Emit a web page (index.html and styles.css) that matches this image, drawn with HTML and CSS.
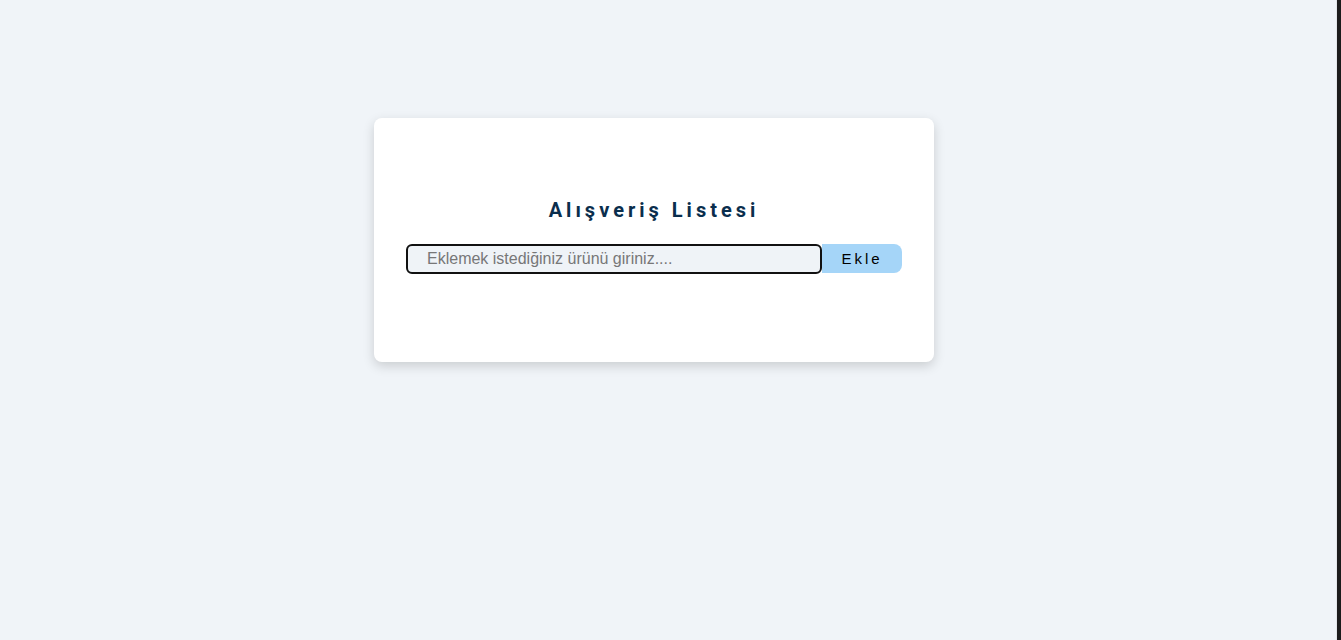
FILE: index.html
```html
<!DOCTYPE html>
<html lang="tr">
<head>
<meta charset="utf-8">
<title>Alışveriş Listesi</title>
<link rel="stylesheet" href="styles.css">
</head>
<body>
<div class="page">
  <main class="main">
    <section class="card">
      <h1 class="title">Alışveriş Listesi</h1>
      <form class="add-form">
        <input class="item-input" type="text" placeholder="Eklemek istediğiniz ürünü giriniz....">
        <button class="add-btn" type="button">Ekle</button>
      </form>
    </section>
  </main>
  <div class="edge"></div>
</div>
</body>
</html>
```
FILE: styles.css
```css
* { box-sizing: border-box; }
html, body { margin: 0; padding: 0; height: 100%; }
body {
  background: #f0f4f8;
  font-family: "Liberation Sans", Arial, sans-serif;
  overflow: hidden;
}
.page {
  display: flex;
  height: 640px;
}
.main {
  flex: 1;
  padding: 118px 0 0 374px;
  border-right: 1px solid #e3e6ea;
}
.edge {
  width: 4px;
  background: #1c1c1c;
}
.card {
  width: 560px;
  height: 244px;
  background: #ffffff;
  border-radius: 8px;
  box-shadow: 0 4px 12px rgba(0, 0, 0, 0.16);
  padding: 79px 32px 0;
  display: flex;
  flex-direction: column;
}
.title {
  margin: 0 0 21px;
  text-align: center;
  font-family: Roboto, "Liberation Sans", sans-serif;
  font-weight: 700;
  font-size: 20px;
  line-height: 26px;
  letter-spacing: 4px;
  color: #0a2e4d;
}
.add-form {
  display: flex;
  height: 30px;
}
.item-input {
  width: 416px;
  height: 30px;
  border: 2px solid #111111;
  border-radius: 6px;
  background: #eff3f7;
  padding: 0 0 0 19px;
  font-family: "Liberation Sans", Arial, sans-serif;
  font-size: 16px;
  color: #222;
  outline: none;
}
.item-input::placeholder { color: #777777; }
.add-btn {
  width: 80px;
  height: 29px;
  border: none;
  background: #a5d5f8;
  border-radius: 0 8px 8px 0;
  font-family: "Liberation Sans", Arial, sans-serif;
  font-size: 15px;
  letter-spacing: 3px;
  padding: 0;
  color: #000;
  cursor: pointer;
}
```
